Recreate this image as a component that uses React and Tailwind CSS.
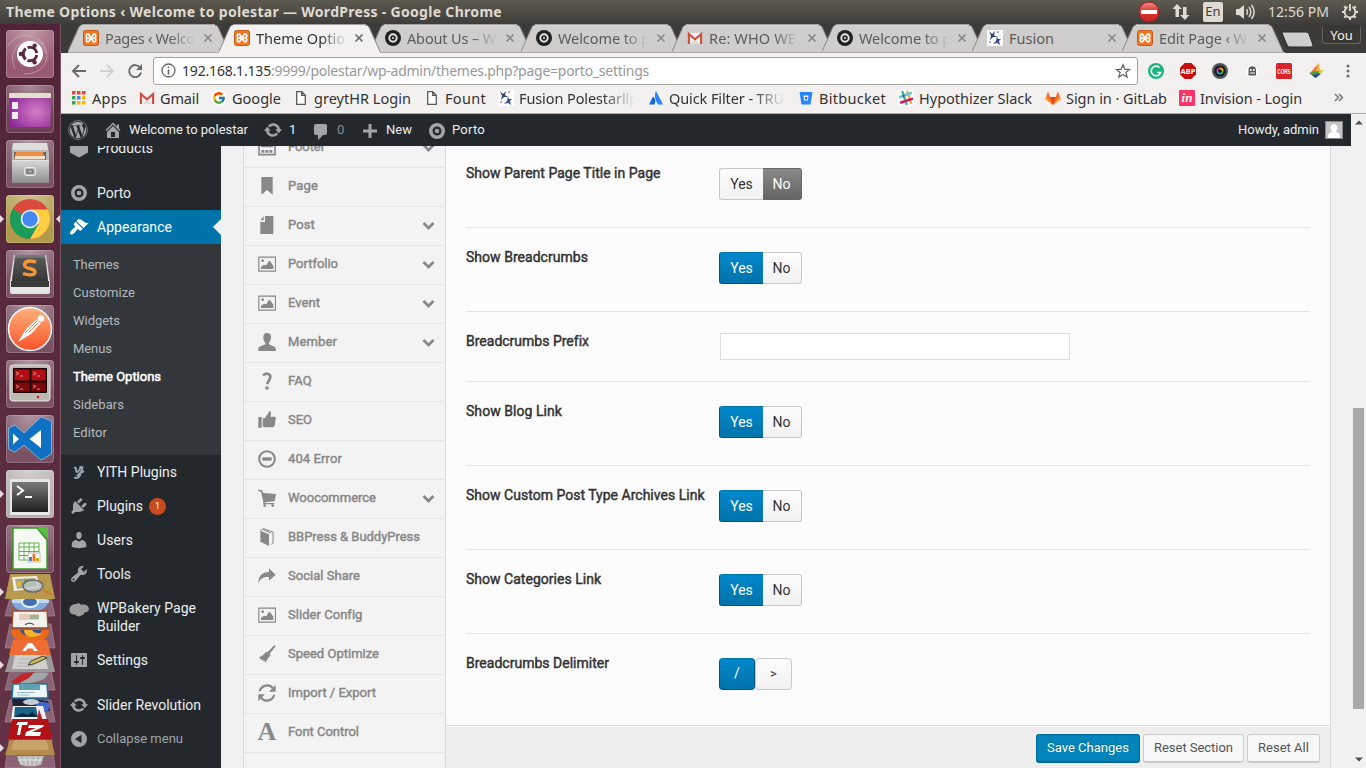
import { useLayoutEffect, useRef } from "react";
import { FaWordpress } from "react-icons/fa";
import { FcGoogle } from "react-icons/fc";

const UBUNTU = "font-['Noto_Sans','Open_Sans',sans-serif]";

/* Text run whose tracking is adjusted so that it fills a given width. */
function Fit({ w, className = "", children }) {
  const ref = useRef(null);
  useLayoutEffect(() => {
    const el = ref.current;
    el.style.letterSpacing = "0px";
    const natural = el.getBoundingClientRect().width;
    el.style.letterSpacing = (w - natural) / children.length + "px";
  }, [w, children]);
  return (
    <span ref={ref} className={"inline-block whitespace-pre shrink-0 " + className}>
      {children}
    </span>
  );
}

/* ---------- Title bar ---------- */

function TitleBar() {
  return (
    <header className={"flex h-6 shrink-0 items-center bg-linear-to-b from-[#5d5a50] to-[#3e3d39] pl-1.5 pr-[7px] text-[#dfdbd2] " + UBUNTU}>
      <Fit w={496} className="text-[14px] font-bold leading-6">
        Theme Options ‹ Welcome to polestar — WordPress - Google Chrome
      </Fit>
      <div className="ml-auto flex items-center">
        <svg width="22" height="22" viewBox="0 0 22 22">
          <defs>
            <linearGradient id="stop" x1="0" y1="0" x2="0" y2="1">
              <stop offset="0" stopColor="#f08a80" />
              <stop offset=".45" stopColor="#dc3a35" />
              <stop offset="1" stopColor="#c8201f" />
            </linearGradient>
          </defs>
          <circle cx="11" cy="11" r="10" fill="url(#stop)" stroke="#a8201c" />
          <rect x="3" y="9" width="16" height="4" rx=".5" fill="#fff" />
        </svg>
        <svg className="ml-3" width="18" height="18" viewBox="0 0 18 18" fill="#dfdbd2">
          <path d="M5 1l5 5H7v8H3.500V6H.5zM13 17l-5-5h3V4h3.500v8h3z" />
        </svg>
        <span className="ml-[13px] flex h-5 w-5 items-center justify-center rounded-[2px] bg-[#dfdbd2] text-[13px] text-[#3c3b37]">En</span>
        <svg className="ml-3" width="21" height="18" viewBox="0 0 21 18" fill="#dfdbd2">
          <path d="M1 6h3l5-4v14l-5-4H1z" />
          <path d="M11.500 6.200q2 2.800 0 5.600M14 4q3.600 5 0 10M16.500 2q5.200 7 0 14" fill="none" stroke="#dfdbd2" strokeWidth="1.500" />
        </svg>
        <Fit w={61} className="ml-[12px] text-[14px] leading-6">12:56 PM</Fit>
        <svg className="ml-3" width="18" height="18" viewBox="0 0 18 18">
          <circle cx="9" cy="9" r="5.400" fill="none" stroke="#dfdbd2" strokeWidth="1.900" />
          <g stroke="#dfdbd2" strokeWidth="2.200">
            <path d="M9 14v3M1 9h3M14 9h3M3.300 3.300l2 2M14.700 3.300l-2 2M3.300 14.700l2-2M14.700 14.700l-2-2" />
          </g>
          <path d="M6.800 1h4.400v7H6.800z" fill="#4f4d46" />
          <path d="M9 1v7" stroke="#dfdbd2" strokeWidth="1.900" />
        </svg>
      </div>
    </header>
  );
}

/* ---------- Launcher ---------- */

function Tile({ base = "#7a5264", children, left, right }) {
  return (
    <svg className="block shrink-0" width="61" height="55" viewBox="0 0 61 55">
      <rect x="5.500" y="5.500" width="49" height="49" rx="4" fill="#000" opacity=".15" />
      <rect x="6" y="6" width="48" height="48" rx="3.500" fill={base} />
      <rect x="6" y="6" width="48" height="48" rx="3.500" fill="url(#shine)" />
      <rect x="6.500" y="6.500" width="47" height="47" rx="3" fill="none" stroke="#fff" opacity=".2" />
      {children}
      {left && <path d="M0 26l4 4-4 4z" fill="#e4dce0" />}
      {right && <path d="M60 26l-4 4 4 4z" fill="#e4dce0" />}
    </svg>
  );
}

function Launcher() {
  return (
    <nav className="flex w-[61px] shrink-0 flex-col overflow-hidden border-r border-[#7b5566] bg-linear-to-b from-[#522439] to-[#633345] ">
      <svg width="0" height="0" className="block">
        <defs>
          <radialGradient id="shine" cx=".5" cy="0" r=".8">
            <stop offset="0" stopColor="#fff" stopOpacity=".4" />
            <stop offset="1" stopColor="#fff" stopOpacity="0" />
          </radialGradient>
          <radialGradient id="purple" cx=".65" cy=".55" r=".7">
            <stop offset="0" stopColor="#d47cc4" />
            <stop offset="1" stopColor="#8e2a9a" />
          </radialGradient>
          <linearGradient id="silver" x1="0" y1="0" x2="0" y2="1">
            <stop offset="0" stopColor="#d8d8d8" />
            <stop offset="1" stopColor="#8e8e8e" />
          </linearGradient>
          <linearGradient id="postman" x1="0" y1="0" x2="0" y2="1">
            <stop offset="0" stopColor="#ffb27a" />
            <stop offset="1" stopColor="#f8522a" />
          </linearGradient>
          <linearGradient id="dark" x1="0" y1="0" x2="0" y2="1">
            <stop offset="0" stopColor="#7a7a7a" />
            <stop offset="1" stopColor="#1e1e1e" />
          </linearGradient>
        </defs>
      </svg>
      <Tile base="#985a73">
        <path d="M15 45C6 26 22 10 44 20M24 50C48 50 54 28 38 14M8 22C18 6 40 8 46 30" stroke="#d9b3c0" strokeWidth="1" fill="none" opacity=".6" />
        <circle cx="30" cy="30" r="13" fill="#fff" />
        <circle cx="30" cy="30" r="6.800" fill="none" stroke="#5b2b40" strokeWidth="3" strokeDasharray="12.200 2" strokeDashoffset="-1" />
        <circle cx="20.800" cy="30" r="2.200" fill="#5b2b40" />
        <circle cx="34.600" cy="21.800" r="2.200" fill="#5b2b40" />
        <circle cx="34.600" cy="38.200" r="2.200" fill="#5b2b40" />
      </Tile>
      <Tile base="#6f4055">
        <rect x="9.500" y="14" width="41" height="34" rx="1" fill="url(#purple)" />
        <rect x="9" y="14" width="42" height="5" rx="1" fill="#e2e0c8" />
        <rect x="12" y="23" width="6" height="7" fill="#f6eef6" />
        <rect x="12" y="33" width="6" height="7" fill="#f6eef6" />
      </Tile>
      <Tile>
        <path d="M13 9h34l2 10v30H12V19z" fill="#b9b9b7" />
        <path d="M13 9h34l1 7H12z" fill="#dededc" />
        <path d="M14 18h32v9H14z" fill="#6b6560" />
        <path d="M16 18h27l2 8H14z" fill="#ec8f45" />
        <path d="M15 22h30v3H15z" fill="#f2e2cc" />
        <path d="M12 26h37v23H12z" fill="url(#silver)" />
        <path d="M12 26.500h37" stroke="#e4e4e4" />
        <rect x="24.500" y="33.500" width="11" height="8" rx="2" fill="#bcbcbc" stroke="#eee" />
        <rect x="27" y="36" width="6" height="3" fill="none" stroke="#555" />
      </Tile>
      <Tile base="#b09a4a" left right>
        <circle cx="30" cy="30" r="20" fill="#db4a3f" />
        <path d="M12.700 20A20 20 0 0 0 30 50L38.700 35 30 30z" fill="#1b9d5a" />
        <path d="M30 20.500h17.600A20 20 0 0 1 30 50l8.700-15z" fill="#ffcd42" />
        <circle cx="30" cy="30" r="9.300" fill="#f4f4f4" />
        <circle cx="30" cy="30" r="7.700" fill="#4587f3" />
      </Tile>
      <Tile>
        <path d="M14 11h32l4 27v10q0 2-2 2H12q-2 0-2-2V38z" fill="#e6e6e6" />
        <path d="M15 11h30l3 26H12z" fill="url(#dark)" />
        <path d="M14.700 14h30.600l2.700 23H12z" fill="#4a4a4a" opacity=".6" />
        <path d="M11 37h38v6H11z" fill="#3a3a3a" />
        <path d="M36 18.200C30 16 24.500 17 24.500 21c0 4.500 10.500 2.500 10.500 7 0 3.500-6 3.500-12 1.500" stroke="#f7962f" strokeWidth="3.400" fill="none" />
      </Tile>
      <Tile>
        <circle cx="30" cy="30" r="21.500" fill="url(#postman)" stroke="#fff" strokeWidth="1.500" />
        <path d="M18 43l8-13 11-10 4 4-10 11zM26 38l-8 4" fill="#fff" />
        <path d="M25 34l12-12M29 33l9-9" stroke="#f98352" strokeWidth="1" />
        <circle cx="41" cy="19.500" r="3.800" fill="#fff" stroke="#f9a37c" />
      </Tile>
      <Tile>
        <rect x="10" y="11" width="40" height="36" rx="3" fill="#bdbbb4" stroke="#e8e6df" />
        <rect x="13" y="14" width="34" height="25" rx="1" fill="#1d0405" />
        <path d="M14.500 15.500h15v11h-15zM31.500 15.500h14v11h-14z" fill="#b30e15" />
        <path d="M14.500 28.500h15v9h-15zM31.500 28.500h14v9h-14z" fill="#7d070b" />
        <path d="M16 18l3 1.500-3 1.500M33 18l3 1.500-3 1.500M16 31l3 1.500-3 1.500M33 31l3 1.500-3 1.500M20 22h3M37 22h3M20 35h3M37 35h3" stroke="#e3a9a9" strokeWidth=".8" fill="none" />
        <circle cx="38" cy="43" r="1.300" fill="#e11" />
      </Tile>
      <Tile>
        <path d="M41 8l10.500 4v33L41 51 24 36l-9 7-6.500-3V19l6.500-3 9 8z" fill="#0f71c4" stroke="#a9c9e8" strokeWidth=".7" />
        <path d="M41 21v18L29.500 30zM13 24.500v11l6-5.500z" fill="#fff" />
      </Tile>
      <Tile base="#b5b0b0" left>
        <rect x="10" y="15" width="40" height="36" rx="1" fill="#e6e6e6" />
        <rect x="12" y="18" width="36" height="30" fill="url(#dark)" />
        <path d="M17 22l6 4.500-6 4.500M25 33h7" stroke="#fff" strokeWidth="2" fill="none" />
      </Tile>
      <Tile>
        <path d="M13 9h24l10 12v29H13z" fill="#f6f8f3" stroke="#3c9a2c" strokeWidth="1.500" />
        <path d="M37 8.500h11V20z" fill="#57c03e" />
        <path d="M19 24h20v17H19zM19 28h20M19 32.500h20M19 36.500h20M24 24v17M29 24v17M34 24v17" fill="#fff" stroke="#5db643" />
        <path d="M28 34h12v9H28z" fill="#fff" stroke="#bbb" />
        <path d="M29 38h3v4h-3z" fill="#3f86d0" />
        <path d="M32.500 35h3v7h-3z" fill="#e87a28" />
        <path d="M36 39h3v3h-3z" fill="#c9a915" />
      </Tile>
      <svg className="block shrink-0" width="61" height="194" viewBox="0 574 61 194">
        <g fill="#8a6374" stroke="#b394a2" strokeWidth=".6">
          <path d="M10 735h41l4 33H5zM10 700h41l4 22H5zM10 670h41l4 20H5zM10 624h41l4 24H5zM10 598h41l4 18H5z" />
        </g>
        <ellipse cx="30" cy="600" rx="18.500" ry="12.500" fill="#7fa9dc" />
        <path d="M12 600q18-5 37 0v3H12z" fill="#c0d9f3" />
        <ellipse cx="30" cy="602" rx="8" ry="5" fill="#3f6fb4" stroke="#e6f0fa" strokeWidth="2" />
        <path d="M10 574h40l5 25H5z" fill="#b89a4f" />
        <path d="M12 577l25-1 3 12-26 3z" fill="#f1efe6" />
        <path d="M15 579l20-1 2 8-20 3z" fill="#a9a988" />
        <circle cx="19" cy="584" r="2.500" fill="#e8b540" />
        <circle cx="26" cy="581" r="2" fill="#6d9b4c" />
        <ellipse cx="33" cy="586" rx="10" ry="6" fill="#b9c8cc" fillOpacity=".75" stroke="#6a6d6c" strokeWidth="1.500" />
        <path d="M43 590l9 5" stroke="#c9822b" strokeWidth="3" />
        <path d="M13 611h34l1 17H12z" fill="#f5f2ee" stroke="#9b4a2b" strokeWidth="1.300" />
        <path d="M19 614h20v6H19z" fill="#e9cbb9" />
        <path d="M30 615h9v4h-9z" fill="#9bb892" />
        <path d="M25 624.500q5-3 9 0" stroke="#333" fill="none" />
        <path d="M11 630h38q0 12-19 12t-19-12" fill="#ea6a1a" />
        <path d="M20 630h22q-2 6-11 6t-11-6" fill="#35538f" />
        <path d="M24 630h8q3 4 10 3-3 4-11 4-7-1-7-7" fill="#f6b12c" />
        <path d="M13 640h34l4 15H9z" fill="#ee6c33" />
        <path d="M22 651l6-8h4l6 8h-4l-1.500-2.500h-5L26 651z" fill="#fff" />
        <path d="M10 655h41l4 17H5z" fill="#9c979a" />
        <path d="M15 655h30l3 14H12z" fill="#cfcfce" />
        <path d="M19 659h18M18 663h14M17 666h16" stroke="#a9a9a9" strokeWidth=".8" />
        <path d="M28 665l3-4 12-5 4 2-13 6z" fill="#c6b84e" stroke="#222" strokeWidth=".8" />
        <path d="M20 684q14 0 24-5l5-6q-14-2-24 2z" fill="#9ea7a9" />
        <path d="M12 681l10-7 12-2q-4 8-21 13z" fill="#c22327" />
        <path d="M13 684h34l1 14H12z" fill="#eef5f8" stroke="#1b76a3" strokeWidth="1.500" />
        <path d="M19 684h21v6H19z" fill="#5fa2b4" />
        <path d="M17 692.500h18M17 695h12" stroke="#9bbccb" />
        <path d="M12 699q15-1 36 2l2 10-22 2-15-5z" fill="#202635" />
        <path d="M36 701l14 2-2 9-12-4z" fill="#4169cf" />
        <ellipse cx="31" cy="702" rx="8" ry="3" fill="#c9cdd3" />
        <path d="M13 706h30l4 15H11z" fill="#f3f3f3" />
        <path d="M15 707h21l2 10H14z" fill="#1d6189" />
        <path d="M14 717l8-4 6 2 4-3 6 5z" fill="#0d2b40" />
        <path d="M39 709l4 12h-6z" fill="#c21e27" />
        <path d="M12 719h36l4 20H8z" fill="#b31018" />
        <path d="M18 722h10l-1 3h-5l-2 10h-3l2-10h-3zM29 725h15l-1 2-11 5h9l-1 4H25l1-4 10-4h-8z" fill="#fff" />
        <path d="M10 740h41l4 15H5z" fill="#b58b4c" />
        <path d="M14 740h32l3 10H11z" fill="#c8a46b" />
        <path d="M10 739.500h41" stroke="#7a3b1f" strokeDasharray="2 1.500" />
        <path d="M17 756h27l-3 9q-10 3-21 0z" fill="#b9b9b9" />
        <path d="M19 757l3 7M24 757l2 8M36 757l-2 8M41 757l-3 7M30 757v8M18 760h24" stroke="#e2e2e2" fill="none" />
        <path d="M0 588l4 4-4 4zM0 661l4 4-4 4zM0 744l4 4-4 4z" fill="#e4dce0" />
      </svg>
    </nav>
  );
}

/* ---------- Browser chrome ---------- */

const Xampp = () => (
  <svg width="16" height="16" viewBox="0 0 16 16">
    <rect x=".5" y=".5" width="15" height="15" rx="2" fill="#f37623" stroke="#c65a17" />
    <path d="M6.300 8H4.800a1.600 1.900 0 1 1 1.600-2.200Q8 7.500 9.600 5.800A1.600 1.900 0 1 1 11.200 8H4.800a1.600 1.900 0 1 0 1.600 2.200Q8 8.500 9.600 10.200A1.600 1.900 0 1 0 11.200 8" fill="none" stroke="#fff" strokeWidth="1.700" />
  </svg>
);

const Disc = () => (
  <svg width="16" height="16" viewBox="0 0 16 16">
    <circle cx="8" cy="8" r="8" fill="#222" />
    <circle cx="8" cy="8" r="3.700" fill="none" stroke="#e8e8e8" strokeWidth="1.900" />
    <circle cx="8" cy="8" r="1" fill="#e8e8e8" />
  </svg>
);

const Gmail = () => (
  <svg width="16" height="16" viewBox="0 0 16 16">
    <path d="M1 3h14v11H1z" fill="#f2f2f2" />
    <path d="M3 14l5-5 5 5z" fill="#ddd" />
    <path d="M1.900 14V4L8 9.300 14.100 4v10" fill="none" stroke="#d54b3d" strokeWidth="2.100" />
  </svg>
);

const Star = () => (
  <svg width="16" height="16" viewBox="0 0 16 16">
    <rect width="16" height="16" fill="#fff" />
    <path d="M2 1l3 3 3-3-1 4 3 2-4 0-3 3 1-4z" fill="#2f4478" />
    <path d="M10 6l1 3 3 0-2 2 1 4-3-2-4 1 3-3z" fill="#37528c" />
    <circle cx="3" cy="12" r=".8" fill="#2f4478" />
    <circle cx="11" cy="2" r=".8" fill="#2f4478" />
  </svg>
);

const Doc = () => (
  <svg width="16" height="16" viewBox="0 0 16 16">
    <path d="M3.700 1.700h5l3.600 3.600v9H3.700zM8.700 1.700v3.600h3.600" fill="#fff" stroke="#5a5a5a" strokeWidth="1.300" />
  </svg>
);

const AppsGrid = () => (
  <svg width="16" height="16" viewBox="0 0 16 16">
    <path d="M1 1h3.500v3.500H1zM6 1h3.500v3.500H6zM11 1h3.500v3.500H11z" fill="#e8453c" />
    <path d="M1 6h3.500v3.500H1z" fill="#31a853" />
    <path d="M6 6h3.500v3.500H6z" fill="#4285f4" />
    <path d="M11 6h3.500v3.500H11zM6 11h3.500v3.500H6zM11 11h3.500v3.500H11z" fill="#fbb605" />
    <path d="M1 11h3.500v3.500H1z" fill="#31a853" />
  </svg>
);

const Atlassian = () => (
  <svg width="16" height="16" viewBox="0 0 16 16">
    <path d="M8 1l7 13.500h-5C7 10 6 5 8 1z" fill="#2684ff" />
    <path d="M5 6.500c2 1.500 3 4.500 1.500 8H1z" fill="#1665dd" />
  </svg>
);

const Bitbucket = () => (
  <svg width="16" height="16" viewBox="0 0 16 16">
    <path d="M1.500 2h13l-2 12.500h-9z" fill="#2684ff" />
    <path d="M5.500 5.500h5l-.7 5H6.200z" fill="#fff" />
    <path d="M7 7h2.500l-.5 2.500H7.400z" fill="#1560d8" />
  </svg>
);

const Slack = () => (
  <svg width="16" height="16" viewBox="0 0 16 16" strokeWidth="2.400" strokeLinecap="round">
    <rect width="16" height="16" fill="#fff" />
    <path d="M4.500 2l4 12" stroke="#3eb991" />
    <path d="M9.500 2l3.500 11" stroke="#ecb32d" />
    <path d="M2 7l11-4" stroke="#63c5de" />
    <path d="M3 12.500l11-3.700" stroke="#e01765" />
    <path d="M5.600 5.800l.1.200" stroke="#2a6e5b" />
    <path d="M11.800 9.500l.1.100" stroke="#cc2027" />
  </svg>
);

const GitLab = () => (
  <svg width="16" height="16" viewBox="0 0 16 16">
    <path d="M3 1.500L5.300 7h5.400L13 1.500 15.800 9 8 15 .2 9z" fill="#fc6d26" />
    <path d="M5.300 7h5.400L8 15z" fill="#e24329" />
    <path d="M1.300 6.500L8 15 .2 9zM14.700 6.500L8 15l7.800-6z" fill="#fca326" />
  </svg>
);

const Invision = () => (
  <span className="flex h-4 w-4 items-center justify-center rounded-[1px] bg-[#ff3366] font-['Liberation_Serif',serif] text-[13px] font-bold italic leading-none text-white">
    in
  </span>
);

const tabs = [
  { icon: Xampp, text: "Pages ‹ Welco", w: 90, tw: 151 },
  { icon: Xampp, text: "Theme Optio", w: 89, active: true, tw: 151 },
  { icon: Disc, text: "About Us – W", w: 89, tw: 151 },
  { icon: Disc, text: "Welcome to p", w: 92, tw: 151 },
  { icon: Gmail, text: "Re: WHO WE", w: 87, tw: 150 },
  { icon: Disc, text: "Welcome to p", w: 92, tw: 150 },
  { icon: Star, text: "Fusion", w: 45, short: true, tw: 150 },
  { icon: Xampp, text: "Edit Page ‹ W", w: 88, tw: 150 },
];

function Tab({ icon: Icon, text, w, active, short, tw }) {
  return (
    <div className={"relative flex h-[29px] shrink-0 items-center pb-px pl-[15px] " + (active ? "z-10 " : "") + (tw === 151 ? "w-[151px]" : "w-[150px]")}>
      <svg className="absolute left-0 top-0" width="163" height="29" viewBox="0 0 163 29">
        <path d="M-.5 28.500L11 3Q12 1 14 1H146Q149 1 150 3L161.500 28.500V29H-.5z" fill={active ? "#f2f1f0" : "#d0cecc"} />
        <path d="M-.5 28.500L11 3Q12 1 14 1M146 1Q149 1 150 3L161.500 28.500" fill="none" stroke="#8b8985" />
        <path d="M14 .8H147" stroke="#f4f3f2" strokeWidth=".8" />
        {!active && <path d="M0 28.500h163" stroke="#aaa8a5" />}
      </svg>
      <div className="relative flex items-center">
        <Icon />
        <div className={"ml-1.5 flex w-[92px] overflow-hidden text-[14.500px] leading-6 " + (active ? "text-[#333]" : "text-[#5c5b59]") + (short ? "" : " [mask-image:linear-gradient(to_right,#000_70%,transparent_98%)]")}>
          <Fit w={w}>{text}</Fit>
        </div>
        <svg className="ml-1.5" width="10" height="10" viewBox="0 0 10 10">
          <path d="M1.500 1.500l7 7M8.500 1.500l-7 7" stroke={active ? "#6b6b6b" : "#8a8886"} strokeWidth="1.700" />
        </svg>
      </div>
    </div>
  );
}

function TabStrip() {
  return (
    <div className="flex h-[29px] overflow-hidden bg-[#3c3b37] pl-[7px]">
      {tabs.map((t, i) => (
        <Tab key={i} {...t} />
      ))}
      <svg className="ml-[8px] mt-[7px] shrink-0" width="36" height="17" viewBox="0 0 36 17">
        <path d="M3 1h23q2 0 3 2l4 11q0 2-2 2H10q-2 0-3-2L2 2q0-1 1-1z" fill="#d0cecc" stroke="#2a2926" />
      </svg>
      <span className="ml-auto mr-[5px] mt-0.5 flex h-[18px] w-[39px] items-center justify-center rounded-b border border-[#66645e] border-t-[#333] bg-[#393834] text-[13px] leading-none text-[#f0eeea]">
        You
      </span>
    </div>
  );
}

function Extensions() {
  return (
    <div className="ml-[10px] flex items-center gap-4">
      <svg width="16" height="16" viewBox="0 0 16 16">
        <circle cx="8" cy="8" r="8" fill="#19b67e" />
        <path d="M11.500 4.600A4.800 4.800 0 1 0 12.600 9.500H9" fill="none" stroke="#fff" strokeWidth="1.600" />
      </svg>
      <svg width="16" height="16" viewBox="0 0 16 16">
        <path d="M4.700 0h6.600L16 4.700v6.600L11.300 16H4.700L0 11.300V4.700z" fill="#c70d0d" />
        <text x="8" y="10.800" textAnchor="middle" fontSize="7.500" fontWeight="700" fill="#fff" fontFamily="Open Sans">ABP</text>
      </svg>
      <svg width="16" height="16" viewBox="0 0 16 16">
        <circle cx="8" cy="8" r="8" fill="#50555c" />
        <circle cx="8" cy="8" r="5.500" fill="#15171b" />
        <path d="M8 4.500A3.500 3.500 0 0 0 4.500 8H8z" fill="#d433b5" />
        <path d="M8 4.500A3.500 3.500 0 0 1 11.500 8H8z" fill="#e4c72c" />
        <path d="M8 11.500A3.500 3.500 0 0 0 11.500 8H8z" fill="#2ab55c" />
        <path d="M8 11.500A3.500 3.500 0 0 1 4.500 8H8z" fill="#21a4e0" />
        <circle cx="8" cy="8" r="1.800" fill="#15171b" />
      </svg>
      <svg width="16" height="16" viewBox="0 0 16 16">
        <circle cx="8" cy="8" r="6" fill="#fff" />
        <path d="M4.500 12.500V7a3.700 3.700 0 0 1 7.500 0v5.500z" fill="#5a5a5a" />
        <circle cx="6.800" cy="7" r="1" fill="#fff" />
        <circle cx="9.800" cy="7" r="1" fill="#fff" />
        <path d="M6 10h5" stroke="#fff" />
      </svg>
      <svg width="16" height="16" viewBox="0 0 16 16">
        <rect width="16" height="16" rx="1.500" fill="#d8242a" />
        <text transform="translate(8 11) scale(.58 1)" textAnchor="middle" fontSize="8" fontWeight="700" fill="#fff" fontFamily="Liberation Sans">CORS</text>
      </svg>
      <svg width="16" height="16" viewBox="0 0 16 16">
        <path d="M11 0L2 10l5 1z" fill="#e8742a" />
        <path d="M11 0L7 11l5-2z" fill="#f1b82d" />
        <path d="M1 10l14-3-3 5-5 3z" fill="#4d9e46" />
        <path d="M4 12l9-2-5 5z" fill="#2d4b8e" />
        <path d="M10 9l6-3-3 5z" fill="#f0cf3e" />
      </svg>
      <svg width="16" height="16" viewBox="0 0 16 16" fill="#6b6b6b">
        <circle cx="8" cy="3" r="1.500" />
        <circle cx="8" cy="8" r="1.500" />
        <circle cx="8" cy="13" r="1.500" />
      </svg>
    </div>
  );
}

function Toolbar() {
  return (
    <div className="flex h-9 items-center bg-[#f2f1f0] pb-px pl-[10px]">
      <svg width="16" height="16" viewBox="0 0 16 16">
        <path d="M15 8H2M8 2L2 8l6 6" fill="none" stroke="#6a6a6a" strokeWidth="1.900" />
      </svg>
      <svg className="ml-3" width="16" height="16" viewBox="0 0 16 16">
        <path d="M1 8h13M8 2l6 6-6 6" fill="none" stroke="#d4d2d0" strokeWidth="1.900" />
      </svg>
      <svg className="ml-3" width="16" height="16" viewBox="0 0 16 16">
        <path d="M13.200 4.800A6 6 0 1 0 14 9.500" fill="none" stroke="#6a6a6a" strokeWidth="1.900" />
        <path d="M15 1v6H9z" fill="#6a6a6a" />
      </svg>
      <div className="ml-[10px] flex h-7 w-[985px] items-center rounded-[3px] border border-[#a5a3a0] bg-white pl-[7px] pr-1.5 text-[14px]">
        <svg width="15" height="15" viewBox="0 0 15 15">
          <circle cx="7.500" cy="7.500" r="6.500" fill="none" stroke="#666" strokeWidth="1.300" />
          <path d="M7.500 6.500v5M7.500 3.500v1.600" stroke="#666" strokeWidth="1.600" />
        </svg>
        <Fit w={89} className="ml-1.5 text-[#333]">192.168.1.135</Fit>
        <Fit w={378} className="text-[#999]">:9999/polestar/wp-admin/themes.php?page=porto_settings</Fit>
        <svg className="ml-auto" width="16" height="16" viewBox="0 0 16 16">
          <path d="M8 1.800l1.800 4.400 4.700.3-3.600 3 1.200 4.600L8 11.500l-4.100 2.600 1.200-4.600-3.600-3 4.700-.3z" fill="none" stroke="#666" strokeWidth="1.300" />
        </svg>
      </div>
      <Extensions />
    </div>
  );
}

const bookmarks = [
  { icon: AppsGrid, text: "Apps", w: 35, cls: "w-[68px]" },
  { icon: Gmail, text: "Gmail", w: 39, cls: "w-[72px]" },
  { icon: () => <FcGoogle className="rounded-full bg-white p-px" size={16} />, text: "Google", w: 49, cls: "w-[82px]" },
  { icon: Doc, text: "greytHR Login", w: 97, cls: "w-[131px]" },
  { icon: Doc, text: "Fount", w: 41, cls: "w-[74px]" },
  { icon: Star, text: "Fusion Polestarllp", w: 119, cls: "w-[150px]", fade: true },
  { icon: Atlassian, text: "Quick Filter - TRU", w: 115, cls: "w-[150px]", fade: true },
  { icon: Bitbucket, text: "Bitbucket", w: 67, cls: "w-[100px]" },
  { icon: Slack, text: "Hypothizer Slack", w: 113, cls: "w-[147px]" },
  { icon: GitLab, text: "Sign in · GitLab", w: 101, cls: "w-[134px]" },
  { icon: Invision, text: "Invision - Login", w: 102, cls: "w-[150px]" },
];

function Bookmarks() {
  return (
    <div className="flex h-[25px] items-center border-b border-[#b0aeab] bg-[#f2f1f0] pb-[7px] pl-[10px] text-[14.500px] text-[#333]">
      {bookmarks.map(({ icon: Icon, text, w, cls, fade }) => (
        <div key={text} className={"flex h-5 shrink-0 items-center gap-[5px] " + cls}>
          <span className="shrink-0"><Icon /></span>
          <div className={fade ? "flex w-[119px] overflow-hidden [mask-image:linear-gradient(to_right,#000_70%,transparent_97%)]" : "flex"}>
            <Fit w={w} className="leading-5">{text}</Fit>
          </div>
        </div>
      ))}
      <svg className="ml-[5px]" width="10" height="9" viewBox="0 0 10 9">
        <path d="M1 1l3.500 3.500L1 8M5 1l3.500 3.500L5 8" fill="none" stroke="#777" strokeWidth="1.500" />
      </svg>
    </div>
  );
}

/* ---------- WordPress ---------- */

const D = {
  home: "M16 8.500l1.530 1.530-1.060 1.060L10 4.600l-6.470 6.490-1.060-1.060L10 2.500l4 4v-2h2v4zm-6-2.460l6 5.990V18H4v-5.970zM12 17v-5H8v5h4z",
  update: "M10.200 3.280c3.530 0 6.430 2.610 6.920 6h2.080l-3.500 4-3.500-4h2.320c-.45-1.970-2.210-3.450-4.320-3.450-1.450 0-2.730.71-3.540 1.780L4.950 5.660C6.230 4.200 8.110 3.280 10.200 3.280zm-.4 13.440c-3.520 0-6.430-2.610-6.920-6H.8l3.500-4c1.170 1.330 2.330 2.670 3.500 4H5.480c.45 1.970 2.210 3.450 4.320 3.450 1.450 0 2.730-.71 3.540-1.780l1.710 1.950c-1.280 1.460-3.150 2.380-5.250 2.380z",
  comment: "M5 2h9c1.100 0 2 .9 2 2v7c0 1.100-.9 2-2 2h-2l-5 5v-5H5c-1.100 0-2-.9-2-2V4c0-1.100.9-2 2-2z",
  plus: "M17 8.500v3h-5.500V17h-3v-5.500H3v-3h5.500V3h3v5.500z",
  brush: "M14.480 11.060L7.410 3.990l1.500-1.500c.5-.56 2.300-.47 3.510.32 1.210.8 1.430 1.280 2.910 2.100 1.180.64 2.450 1.260 4.450.85zm-.71.71L6.700 4.700 4.930 6.470c-.39.39-.39 1.020 0 1.410l1.060 1.060c.39.39.39 1.030 0 1.420-.6.6-1.430 1.110-2.210 1.690-.35.26-.7.53-1.010.84C1.430 14.230.4 16.080 1.400 17.070c.99 1 2.840-.03 4.180-1.360.31-.31.58-.66.85-1.020.57-.78 1.080-1.610 1.690-2.210.39-.39 1.020-.39 1.410 0l1.060 1.060c.39.39 1.020.39 1.410 0z",
  plug: "M13.110 4.360L9.870 7.600 8 5.730l3.240-3.240c.35-.34 1.050-.2 1.560.32.52.51.66 1.210.31 1.550zm-8 1.770l.91-1.120 9.010 9.010-1.190.84c-.71.71-2.630 1.160-3.820 1.160H6.140L4.900 17.260c-.59.59-1.540.59-2.120 0-.59-.58-.59-1.530 0-2.120l1.240-1.240v-3.880c0-1.130.4-3.190 1.090-3.890zm7.260 3.970l3.240-3.240c.34-.35 1.040-.21 1.550.31.52.51.66 1.210.31 1.550l-3.240 3.250z",
  users: "M10 9.250c-2.270 0-2.730-3.440-2.730-3.440C7 4.020 7.820 2 9.970 2c2.160 0 2.980 2.020 2.710 3.810 0 0-.41 3.440-2.680 3.440zm0 2.570L12.720 10c2.390 0 4.520 2.330 4.520 4.530v2.490s-3.650 1.130-7.240 1.130c-3.650 0-7.240-1.130-7.240-1.130v-2.490c0-2.250 1.940-4.480 4.470-4.480z",
  tools: "M16.680 9.770c-1.340 1.340-3.300 1.670-4.950.99l-5.410 6.520c-.99.99-2.590.99-3.580 0s-.99-2.590 0-3.570l6.520-5.420c-.68-1.650-.35-3.610.99-4.950 1.280-1.280 3.120-1.620 4.720-1.060l-2.890 2.890 2.820 2.820 2.860-2.870c.53 1.580.18 3.390-1.080 4.650zM3.810 16.210c.4.39 1.040.39 1.430 0 .4-.4.4-1.040 0-1.430-.39-.4-1.030-.4-1.430 0-.39.39-.39 1.030 0 1.430z",
  settings: "M18 16V4c0-.55-.45-1-1-1H3c-.55 0-1 .45-1 1v12c0 .55.45 1 1 1h14c.55 0 1-.45 1-1zM8 11h1c.55 0 1 .45 1 1s-.45 1-1 1H8v1.500c0 .28-.22.500-.5.500s-.5-.22-.5-.5V13H6c-.55 0-1-.45-1-1s.45-1 1-1h1V5.500c0-.28.22-.5.5-.5s.5.220.5.5V11zm5-2h-1c-.55 0-1-.45-1-1s.45-1 1-1h1V5.500c0-.28.22-.5.5-.5s.5.220.5.5V7h1c.55 0 1 .45 1 1s-.45 1-1 1h-1v5.500c0 .28-.22.500-.5.500s-.5-.22-.5-.5V9z",
  porto: "M10 2a8 8 0 1 0 0 16 8 8 0 1 0 0-16zm0 3.500a4.500 4.500 0 1 1 0 9 4.500 4.500 0 1 1 0-9zm0 2.200a2.300 2.300 0 1 0 0 4.600 2.300 2.300 0 1 0 0-4.600z",
  products: "M1 4l9 4 9-4v10.500L10 19.500l-9-5z",
  bakery: "M7 4c2-1 4-1 5 1 2-1 5-.5 7 1.500 1.500 2 1 4-.5 5-1.500 1-3 1-3.500 1 .5 1-.5 3-2 2.500-1 1-3 2-5 1-1 0-1-1.500-2-1.500-3 .500-5-1-5.500-4C0 7 3 4 7 4z",
  collapse: "M10 2a8 8 0 1 0 0 16 8 8 0 1 0 0-16zm2.500 3.700v8.600L6 10z",
};

function Dash({ d, className = "" }) {
  return (
    <svg className={"shrink-0 " + className} width="20" height="20" viewBox="0 0 20 20" fill="currentColor" fillRule="evenodd">
      <path d={d} />
    </svg>
  );
}

function AdminBar() {
  return (
    <div className="flex h-8 items-center bg-[#23282d] pl-[7px] pr-2 text-[13px] text-[#eee]">
      <FaWordpress size={20} className="text-[#a0a5aa]" />
      <Dash d={D.home} className="ml-[15px] text-[#a0a5aa]" />
      <Fit w={119} className="ml-[6px]">Welcome to polestar</Fit>
      <Dash d={D.update} className="ml-[15px] text-[#a0a5aa]" />
      <span className="ml-[6px] w-[22px]">1</span>
      <Dash d={D.comment} className="mt-1 text-[#a0a5aa]" />
      <span className="ml-[6px] w-[23px] text-[#888d92]">0</span>
      <Dash d={D.plus} className="mt-0.5 text-[#a0a5aa]" />
      <Fit w={26} className="ml-[6px]">New</Fit>
      <Dash d={D.porto} className="ml-[15px] mt-0.5 text-[#a0a5aa]" />
      <Fit w={33} className="ml-[5px]">Porto</Fit>
      <div className="ml-auto flex items-center gap-[6px]">
        <Fit w={81}>Howdy, admin</Fit>
        <svg width="18" height="18" viewBox="0 0 18 18">
          <rect x=".5" y=".5" width="17" height="17" fill="#c5c5c5" stroke="#82878c" />
          <path d="M9 3a3.600 4 0 0 1 2 7.300c.5 1.700 4 1 4 5V17H3v-1.700c0-4 3.500-3.300 4-5A3.600 4 0 0 1 9 3z" fill="#fff" />
        </svg>
      </div>
    </div>
  );
}

function MenuItem({ d, icon, children, className = "h-[34px]" }) {
  return (
    <div className={"flex shrink-0 items-center pl-2 text-[14px] leading-[18px] text-[#eee] " + className}>
      {icon || <Dash d={d} className="text-[#a0a5aa]" />}
      <div className="ml-2 flex items-center">{children}</div>
    </div>
  );
}

function Sidebar() {
  return (
    <aside className="flex w-40 shrink-0 flex-col overflow-hidden bg-[#23282d]">
      <div className="-mt-[15px] flex flex-col">
        <MenuItem d={D.products}><Fit w={56}>Products</Fit></MenuItem>
        <MenuItem d={D.porto} className="mt-[11px] h-[34px]"><Fit w={34}>Porto</Fit></MenuItem>
        <div className="flex h-[34px] items-center bg-[#0073aa] pl-2 text-[14px] text-white">
          <Dash d={D.brush} />
          <Fit w={75} className="ml-2">Appearance</Fit>
          <svg className="ml-auto" width="8" height="16" viewBox="0 0 8 16">
            <path d="M8 0v16L0 8z" fill="#f1f1f1" />
          </svg>
        </div>
        <div className="flex h-[211px] flex-col bg-[#32373c] pt-[7px] text-[13px] text-[#b4b9be]">
          {[["Themes", 46], ["Customize", 62], ["Widgets", 47], ["Menus", 39], ["Theme Options", 88], ["Sidebars", 51], ["Editor", 34]].map(([t, w]) => (
            <div key={t} className={"flex h-7 items-center pl-3 " + (t === "Theme Options" ? "text-white [-webkit-text-stroke:0.5px_white]" : "")}>
              <Fit w={w}>{t}</Fit>
            </div>
          ))}
        </div>
        <MenuItem
          icon={
            <span className="flex h-5 w-5 items-center justify-center">
              <svg width="16" height="16" viewBox="0 0 16 16">
                <circle cx="8" cy="8" r="8" fill="#1d2a38" />
                <path d="M3 4q2-1 2 1.500c0 3 2 4 4-1l.5-1.500 2 .5C9.500 10 9 14 5 14q-1 0-1.500-1M6 12q2-3 7-5" fill="none" stroke="#a0a5aa" strokeWidth="1.900" />
              </svg>
            </span>
          }
        >
          <Fit w={80}>YITH Plugins</Fit>
        </MenuItem>
        <MenuItem d={D.plug}>
          <Fit w={46}>Plugins</Fit>
          <span className="ml-[6px] flex h-[17px] w-[17px] items-center justify-center rounded-full bg-[#ca4a1f] text-[9px] leading-none text-white">1</span>
        </MenuItem>
        <MenuItem d={D.users}><Fit w={36}>Users</Fit></MenuItem>
        <MenuItem d={D.tools}><Fit w={34}>Tools</Fit></MenuItem>
        <MenuItem icon={<Dash d={D.bakery} className="mt-[9px] self-start text-[#9b9b9b]" />} className="h-[52px]">
          <div className="flex flex-col">
            <Fit w={99}>WPBakery Page</Fit>
            <Fit w={43} className="self-start">Builder</Fit>
          </div>
        </MenuItem>
        <MenuItem d={D.settings}><Fit w={51}>Settings</Fit></MenuItem>
        <MenuItem d={D.update} className="mt-[11px] h-[34px]"><Fit w={104}>Slider Revolution</Fit></MenuItem>
        <MenuItem icon={<Dash d={D.collapse} className="text-[#a0a5aa]" />}>
          <Fit w={86} className="text-[13px] text-[#a0a5aa]">Collapse menu</Fit>
        </MenuItem>
      </div>
    </aside>
  );
}

/* ---------- Theme options panel ---------- */

const glyphs = {
  footer: (
    <>
      <path d="M3 2h48v48H3z" fill="none" stroke="currentColor" strokeWidth="5" />
      <path d="M9 10h36v18H9zM10 36h9v8h-9zM22 36h9v8h-9zM34 36h9v8h-9z" />
    </>
  ),
  page: <path d="M10 0h34v53L27 39 10 53z" />,
  post: <path d="M21 0h25v54H7V18h14zM7 13L17 1v12z" />,
  picture: (
    <>
      <path d="M2.500 6.500h50v42h-50z" fill="none" stroke="currentColor" strokeWidth="3.500" />
      <circle cx="14" cy="17" r="4" />
      <path d="M9 42v-7l9-6 7 2 8-14 5 3 8 12v10z" />
    </>
  ),
  member: <path d="M27 0C19 0 15 6 16 14c0 7 3 11 6 15v5L3 42q-3 4-2 12h53q0-8-3-12l-18-8v-5c3-4 5-8 6-15C40 6 36 0 27 0z" />,
  faq: (
    <>
      <path d="M16 11C21 2 37 3 37 15c0 10-9 12-9 22" fill="none" stroke="currentColor" strokeWidth="8" />
      <circle cx="27" cy="48" r="5.500" />
    </>
  ),
  seo: <path d="M1 18h10v32H1zM14 22h6L31 6q2-7 7-4 3 4-1 15h13q5 2 3 7l-3 20q-2 5-7 5H20l-6-3z" />,
  error: (
    <>
      <circle cx="27" cy="27" r="23.500" fill="none" stroke="currentColor" strokeWidth="6" />
      <path d="M13 22h28v10H13z" />
    </>
  ),
  cart: (
    <>
      <path d="M0 2l12 2 4 8 38 3-4 22-29 3v2h28v4H16v-8L9 8 1 6z" />
      <circle cx="20" cy="50" r="4" />
      <circle cx="44" cy="50" r="4" />
    </>
  ),
  book: (
    <>
      <path d="M7 8l26 11v35L7 41z" />
      <path d="M8 7l9-5 28 10v34l-5 3M15 5l24 10" fill="none" stroke="currentColor" strokeWidth="3" />
    </>
  ),
  share: <path d="M1 50C1 26 12 16 33 15V4l20 19-20 18V30C17 28 6 34 1 50z" />,
  broom: <path d="M49 1l4 3-18 22 3 5C32 37 28 44 22 53l-4-8-3 4-3-6-4 1-1-4-6-2C12 34 18 28 23 21l5 1z" />,
  refresh: (
    <>
      <path d="M5 22C10 3 34-2 45 13M49 32C44 51 20 56 9 41" fill="none" stroke="currentColor" strokeWidth="6.500" />
      <path d="M53 3v20H33zM1 51V31h20z" />
    </>
  ),
};

const sections = [
  ["Footer", "footer", 37, 1],
  ["Page", "page", 30],
  ["Post", "post", 27, 1],
  ["Portfolio", "picture", 50, 1],
  ["Event", "picture", 32, 1],
  ["Member", "member", 49, 1],
  ["FAQ", "faq", 24],
  ["SEO", "seo", 24],
  ["404 Error", "error", 54],
  ["Woocommerce", "cart", 88, 1],
  ["BBPress & BuddyPress", "book", 132],
  ["Social Share", "share", 72],
  ["Slider Config", "picture", 74],
  ["Speed Optimize", "broom", 91],
  ["Import / Export", "refresh", 88],
  ["Font Control", "font", 71],
];

function SectionList() {
  return (
    <div className="flex w-[202px] shrink-0 flex-col overflow-hidden border-r border-[#d8d8d8] bg-[#f3f3f3]">
      <div className="-mt-[17px] flex flex-col text-[13px] text-[#888]">
        {sections.map(([t, icon, w, more]) => (
          <div key={t} className="flex h-[39px] shrink-0 items-center border-b border-[#e6e6e6] pb-0.5 pl-[14px] pr-[10px]">
            {icon === "font" ? (
              <span className="flex h-[18px] w-[18px] shrink-0 items-center justify-center font-['Liberation_Serif',serif] text-[26px] font-bold leading-none">A</span>
            ) : (
              <svg className="shrink-0" width="18" height="18" viewBox="0 0 54 54" fill="currentColor">{glyphs[icon]}</svg>
            )}
            <Fit w={w} className="ml-3 [-webkit-text-stroke:0.45px_#888]">{t}</Fit>
            {more && (
              <svg className="ml-auto mt-px" width="13" height="10" viewBox="0 0 13 10">
                <path d="M1.500 2l5 5 5-5" fill="none" stroke="#888" strokeWidth="2.700" />
              </svg>
            )}
          </div>
        ))}
      </div>
    </div>
  );
}

const ON = "border-[#00557f] border-t-[#0073aa] bg-linear-to-b from-[#0088cc] to-[#0073aa] text-white";
const OFF = "border-[#c8c8c8] bg-linear-to-b from-[#fcfcfc] to-[#f2f2f2] text-[#333]";
const GREY = "border-[#666] bg-linear-to-b from-[#8a8a8a] to-[#646464] text-white";

function Switch({ value }) {
  return (
    <div className="flex h-8 text-[14px]">
      <span className={"flex w-[44px] items-center justify-center rounded-l-[3px] border border-r-0 " + (value ? ON : OFF)}>Yes</span>
      <span className={"flex w-[39px] items-center justify-center rounded-r-[3px] border border-l-0 pr-px " + (value ? OFF : GREY)}>No</span>
    </div>
  );
}

function Field({ label, w, last, short, children }) {
  return (
    <div className={"flex shrink-0 " + (short ? "h-[70px] " : "h-[84px] ") + (last ? "" : "border-b border-[#e4e4e4]")}>
      <div className="w-[253px] pt-[19px] text-[14px] leading-5 text-[#333] [-webkit-text-stroke:0.45px_#333]">
        <Fit w={w}>{label}</Fit>
      </div>
      <div className={short ? "pt-[21px]" : "pt-6"}>{children}</div>
    </div>
  );
}

function OptionsPanel() {
  return (
    <div className="flex min-w-0 flex-1 flex-col overflow-hidden bg-[#fcfcfc]">
      <div className="-mt-0.5 flex flex-1 flex-col px-5">
        <Field label="Show Parent Page Title in Page" w={194.5}><Switch /></Field>
        <Field label="Show Breadcrumbs" w={122}><Switch value /></Field>
        <Field label="Breadcrumbs Prefix" w={122.5} short>
          <div className="ml-px h-[27px] w-[350px] border border-[#ddd] bg-white" />
        </Field>
        <Field label="Show Blog Link" w={96}><Switch value /></Field>
        <Field label="Show Custom Post Type Archives Link" w={238.5}><Switch value /></Field>
        <Field label="Show Categories Link" w={135}><Switch value /></Field>
        <Field label="Breadcrumbs Delimiter" w={143} last>
          <div className="flex h-8 text-[13px]">
            <span className={"flex w-9 items-center justify-center rounded-[4px] border pb-[2px] text-[14px] " + ON}>/</span>
            <span className={"flex w-[37px] items-center justify-center rounded-[4px] border pb-px " + OFF}>&gt;</span>
          </div>
        </Field>
      </div>
      <div className="flex h-[43px] shrink-0 items-start justify-end gap-[3px] border-t border-[#ddd] bg-[#eee] pr-[10px] pt-2 text-[13px] text-[#555] shadow-[inset_0_1px_0_#fcfcfc]">
        <span className="flex h-[29px] w-[104px] items-center justify-center rounded-[3px] border border-b-2 border-[#006799] bg-[#0085ba] text-white [text-shadow:0_-1px_1px_#006799]">
          <Fit w={82}>Save Changes</Fit>
        </span>
        <span className="flex h-[29px] w-[101px] items-center justify-center rounded-[3px] border border-b-2 border-[#ccc] bg-[#f7f7f7]">
          <Fit w={79}>Reset Section</Fit>
        </span>
        <span className="flex h-[29px] w-[73px] items-center justify-center rounded-[3px] border border-b-2 border-[#ccc] bg-[#f7f7f7]">
          <Fit w={51}>Reset All</Fit>
        </span>
      </div>
    </div>
  );
}

function Scrollbar() {
  return (
    <div className="flex w-[15px] shrink-0 flex-col items-center bg-[#f1f1f1]">
      <svg className="mt-[6px]" width="8" height="5" viewBox="0 0 8 5"><path d="M0 4.500L4 .5l4 4z" fill="#505050" /></svg>
      <div className="mt-[283px] h-[301px] w-[11px] bg-[#a8a8a8]" />
      <svg className="mt-[48px]" width="8" height="5" viewBox="0 0 8 5"><path d="M0 .5l4 4 4-4z" fill="#505050" /></svg>
    </div>
  );
}

export default function App() {
  return (
    <div className="flex h-[768px] w-[1366px] flex-col overflow-hidden bg-[#3c3b37]">
      <TitleBar />
      <div className="flex min-h-0 flex-1">
        <Launcher />
        <div className="flex min-w-0 flex-1 flex-col">
          <div className={UBUNTU}>
            <TabStrip />
            <Toolbar />
            <Bookmarks />
          </div>
          <div className="flex min-h-0 flex-1 font-['Roboto',sans-serif]">
            <div className="flex min-w-0 flex-1 flex-col">
              <AdminBar />
              <div className="flex min-h-0 flex-1 bg-[#f1f1f1]">
                <Sidebar />
                <div className="ml-[22px] mr-5 flex min-w-0 flex-1 border-x border-[#d8d8d8]">
                  <SectionList />
                  <OptionsPanel />
                </div>
              </div>
            </div>
            <Scrollbar />
          </div>
        </div>
      </div>
    </div>
  );
}
